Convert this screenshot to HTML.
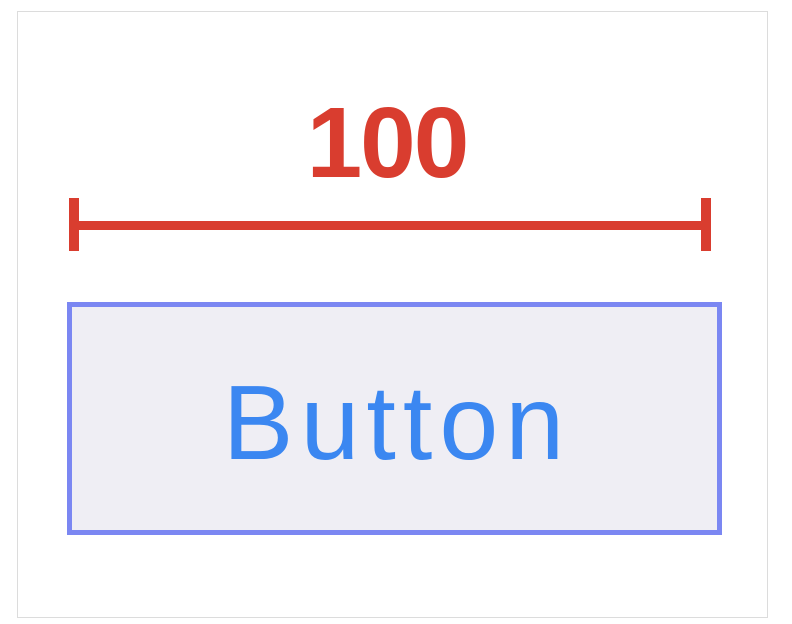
<!DOCTYPE html>
<html><head><style>
html,body{margin:0;padding:0;background:#fff;width:792px;height:624px;overflow:hidden}
.frame{position:absolute;left:17px;top:11px;width:749px;height:605px;border:1px solid #dcdcdc}
.num{position:absolute;left:0;width:774px;top:93px;text-align:center;font:bold 100px/1 "Liberation Sans",sans-serif;color:#d93d2f;letter-spacing:-2px}
.line{position:absolute;left:70px;width:640px;top:221px;height:9px;background:#d93d2f}
.cap{position:absolute;top:198px;width:10px;height:53px;background:#d93d2f}
.btn{position:absolute;left:67px;top:302px;width:645px;height:223px;border:5px solid #7b87f2;background:#efeef4}
.btxt{position:absolute;top:370px;text-align:center;font:106px/1 "Liberation Sans",sans-serif;color:#3b87f1;letter-spacing:7px;padding-left:7px}
</style></head><body>
<div class="frame"></div>
<div class="num">100</div>
<div class="line"></div>
<div class="cap" style="left:69px"></div>
<div class="cap" style="left:701px"></div>
<div class="btn"></div>
<div class="btxt" style="left:0;width:780px">Button</div>
</body></html>
